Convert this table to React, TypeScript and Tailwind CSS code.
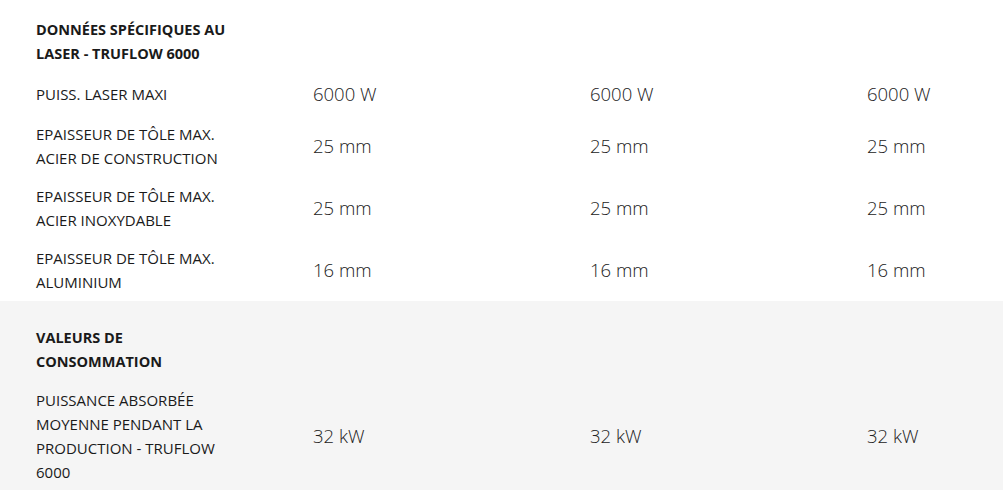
import React from "react";

type Row = { label: string; values: string[] };

const section1: Row[] = [
  { label: "PUISS. LASER MAXI", values: ["6000 W", "6000 W", "6000 W"] },
  { label: "EPAISSEUR DE TÔLE MAX. ACIER DE CONSTRUCTION", values: ["25 mm", "25 mm", "25 mm"] },
  { label: "EPAISSEUR DE TÔLE MAX. ACIER INOXYDABLE", values: ["25 mm", "25 mm", "25 mm"] },
  { label: "EPAISSEUR DE TÔLE MAX. ALUMINIUM", values: ["16 mm", "16 mm", "16 mm"] },
];

const section2: Row[] = [
  {
    label: "PUISSANCE ABSORBÉE MOYENNE PENDANT LA PRODUCTION - TRUFLOW 6000",
    values: ["32 kW", "32 kW", "32 kW"],
  },
];

function Header({ title }: { title: string }) {
  return (
    <div className="flex py-[7px]">
      <div className="w-[277px] shrink-0">
        <div className="w-[205px] text-[14.5px] leading-[24px] font-bold text-[#1a1a1a]">{title}</div>
      </div>
    </div>
  );
}

function DataRow({ row }: { row: Row }) {
  return (
    <div className="flex items-center py-[7px]">
      <div className="w-[277px] shrink-0">
        <div className="w-[205px] text-[15px] leading-[24px] text-[#1a1a1a]">{row.label}</div>
      </div>
      {row.values.map((v, i) => (
        <div key={i} className="w-[277px] shrink-0 text-[18.5px] leading-[28px] font-light text-[#222]">
          {v}
        </div>
      ))}
    </div>
  );
}

export default function App() {
  return (
    <div
      className="w-[1003px] h-[490px] overflow-hidden bg-white"
      style={{ fontFamily: '"Open Sans", "Noto Sans", sans-serif' }}
    >
      <div className="pt-[11px] pl-[36px]">
        <Header title="DONNÉES SPÉCIFIQUES AU LASER - TRUFLOW 6000" />
        {section1.map((r, i) => (
          <DataRow key={i} row={r} />
        ))}
      </div>
      <div className="bg-[#f5f5f5] pt-[18px] pl-[36px] pb-[20px]">
        <Header title="VALEURS DE CONSOMMATION" />
        {section2.map((r, i) => (
          <DataRow key={i} row={r} />
        ))}
      </div>
    </div>
  );
}
